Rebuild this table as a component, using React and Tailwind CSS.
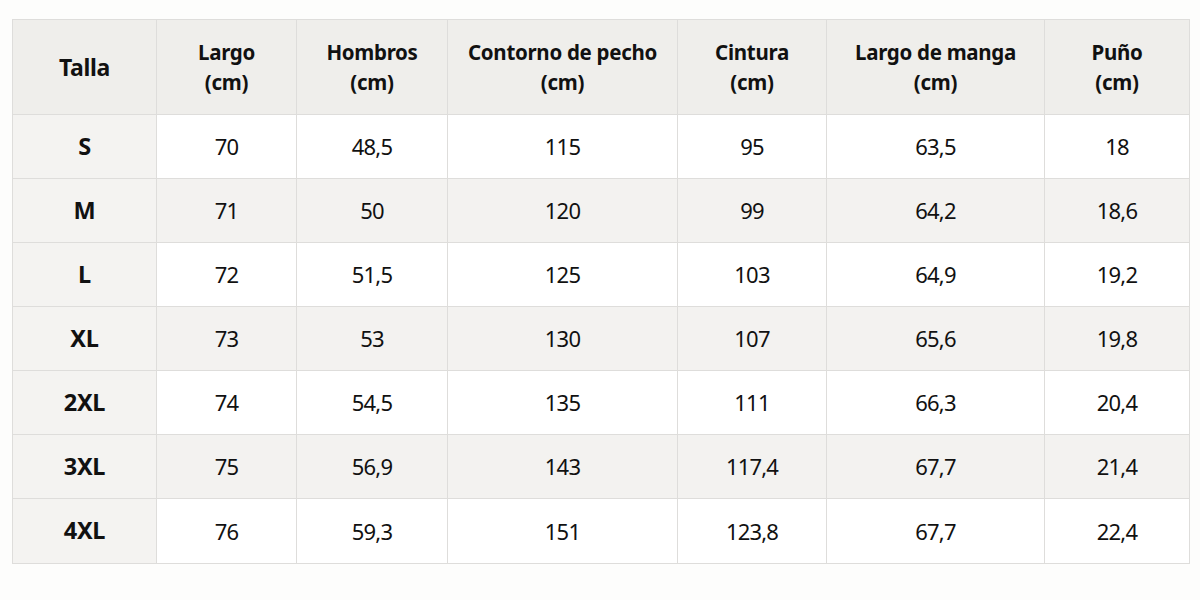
const headers = [
  ["Talla"],
  ["Largo", "(cm)"],
  ["Hombros", "(cm)"],
  ["Contorno de pecho", "(cm)"],
  ["Cintura", "(cm)"],
  ["Largo de manga", "(cm)"],
  ["Puño", "(cm)"],
];

const rows = [
  ["S", "70", "48,5", "115", "95", "63,5", "18"],
  ["M", "71", "50", "120", "99", "64,2", "18,6"],
  ["L", "72", "51,5", "125", "103", "64,9", "19,2"],
  ["XL", "73", "53", "130", "107", "65,6", "19,8"],
  ["2XL", "74", "54,5", "135", "111", "66,3", "20,4"],
  ["3XL", "75", "56,9", "143", "117,4", "67,7", "21,4"],
  ["4XL", "76", "59,3", "151", "123,8", "67,7", "22,4"],
];

const widths = ["w-[144px]", "w-[140px]", "w-[151px]", "w-[230px]", "w-[149px]", "w-[218px]", "w-[145px]"];

export default function App() {
  return (
    <div
      className="w-[1200px] h-[600px] bg-[#fdfdfc] pt-[19px] pl-[12px]"
      style={{ fontFamily: '"Noto Sans", "Open Sans", sans-serif' }}
    >
      <table className="table-fixed border-collapse text-[#111] w-[1178px]">
        <colgroup>
          {widths.map((w, i) => (
            <col key={i} className={w} />
          ))}
        </colgroup>
        <thead>
          <tr className="h-[95px] bg-[#efeeeb]">
            {headers.map((h, i) => (
              <th
                key={i}
                className={
                  "border border-[#dedddb] text-center align-middle font-bold leading-[30px] " +
                  (i === 0 ? "text-[23px] tracking-[-0.3px]" : "text-[20.5px] tracking-[-0.3px]")
                }
              >
                {h.map((line, j) => (
                  <div key={j}>{line}</div>
                ))}
              </th>
            ))}
          </tr>
        </thead>
        <tbody>
          {rows.map((r, ri) => (
            <tr
              key={ri}
              className={
                (ri === rows.length - 1 ? "h-[65px] " : "h-[64px] ") +
                (ri % 2 === 1 ? "bg-[#f3f2f0]" : "bg-white")
              }
            >
              {r.map((c, ci) =>
                ci === 0 ? (
                  <td
                    key={ci}
                    className="border border-[#dedddb] bg-[#f4f3f1] text-center font-bold text-[23.5px] tracking-[-0.3px]"
                  >
                    {c}
                  </td>
                ) : (
                  <td key={ci} className="border border-[#dedddb] text-center text-[22px] tracking-[-0.8px]">
                    {c}
                  </td>
                )
              )}
            </tr>
          ))}
        </tbody>
      </table>
    </div>
  );
}
